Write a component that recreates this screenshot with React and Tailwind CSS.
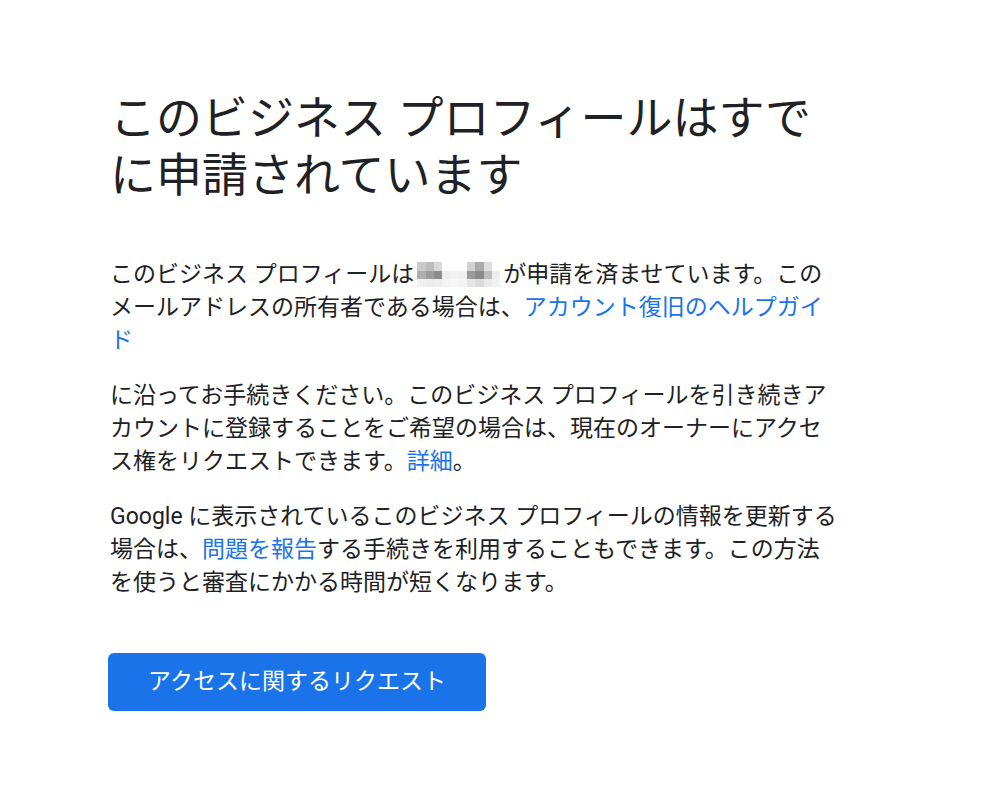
import React from "react";

const blur = [
  ["bg-[#c9c9c9]", "bg-[#bdbdbd]", "bg-[#d9d9d9]", "bg-white", "bg-white", "bg-white", "bg-[#d2d2d2]", "bg-[#ababab]", "bg-[#dedede]", "bg-white"],
  ["bg-[#adadad]", "bg-[#9c9c9c]", "bg-[#8d8d8d]", "bg-[#efefef]", "bg-[#f2f2f2]", "bg-[#efefef]", "bg-[#9a9a9a]", "bg-[#8a8a8a]", "bg-[#bcbcbc]", "bg-[#eeeeee]"],
  ["bg-[#f0f0f0]", "bg-[#ececec]", "bg-[#eeeeee]", "bg-[#f4f4f4]", "bg-[#f6f6f6]", "bg-[#f3f3f3]", "bg-[#e6e6e6]", "bg-[#dcdcdc]", "bg-[#eaeaea]", "bg-[#f2f2f2]"],
];

function Blur() {
  return (
    <span className="inline-flex flex-col align-middle mx-[3px] relative -top-[1px]">
      {blur.map((row, i) => (
        <span key={i} className="flex">
          {row.map((c, j) => (
            <span key={j} className={`block w-[8.3px] h-[8.3px] ${c}`} />
          ))}
        </span>
      ))}
    </span>
  );
}

export default function App() {
  return (
    <div
      className="min-h-[797px] bg-white text-[#202124]"
      style={{ fontFamily: 'Roboto, "Noto Sans CJK JP", sans-serif' }}
    >
      <div className="pl-[110px] pt-[90px]">
        <h1 className="w-[740px] text-[46px] leading-[57px] font-normal">
          このビジネス プロフィールはすでに申請されています
        </h1>
        <div className="w-[732px] mt-[54px] text-[23px] leading-[33px] flex flex-col gap-[22px]">
          <p>
            このビジネス プロフィールは<Blur />が申請を済ませています。このメールアドレスの所有者である場合は、
            <a className="text-[#1a73e8]">アカウント復旧のヘルプガイド</a>
          </p>
          <p>
            に沿ってお手続きください。このビジネス プロフィールを引き続きアカウントに登録することをご希望の場合は、現在のオーナーにアクセス権をリクエストできます。
            <a className="text-[#1a73e8]">詳細</a>。
          </p>
          <p>
            Google に表示されているこのビジネス プロフィールの情報を更新する場合は、
            <a className="text-[#1a73e8]">問題を報告</a>
            する手続きを利用することもできます。この方法を使うと審査にかかる時間が短くなります。
          </p>
        </div>
        <button className="mt-[54px] -ml-[2px] w-[378px] h-[58px] rounded-[6px] bg-[#1a73e8] text-white text-[23px] flex items-center justify-center">
          アクセスに関するリクエスト
        </button>
      </div>
    </div>
  );
}
